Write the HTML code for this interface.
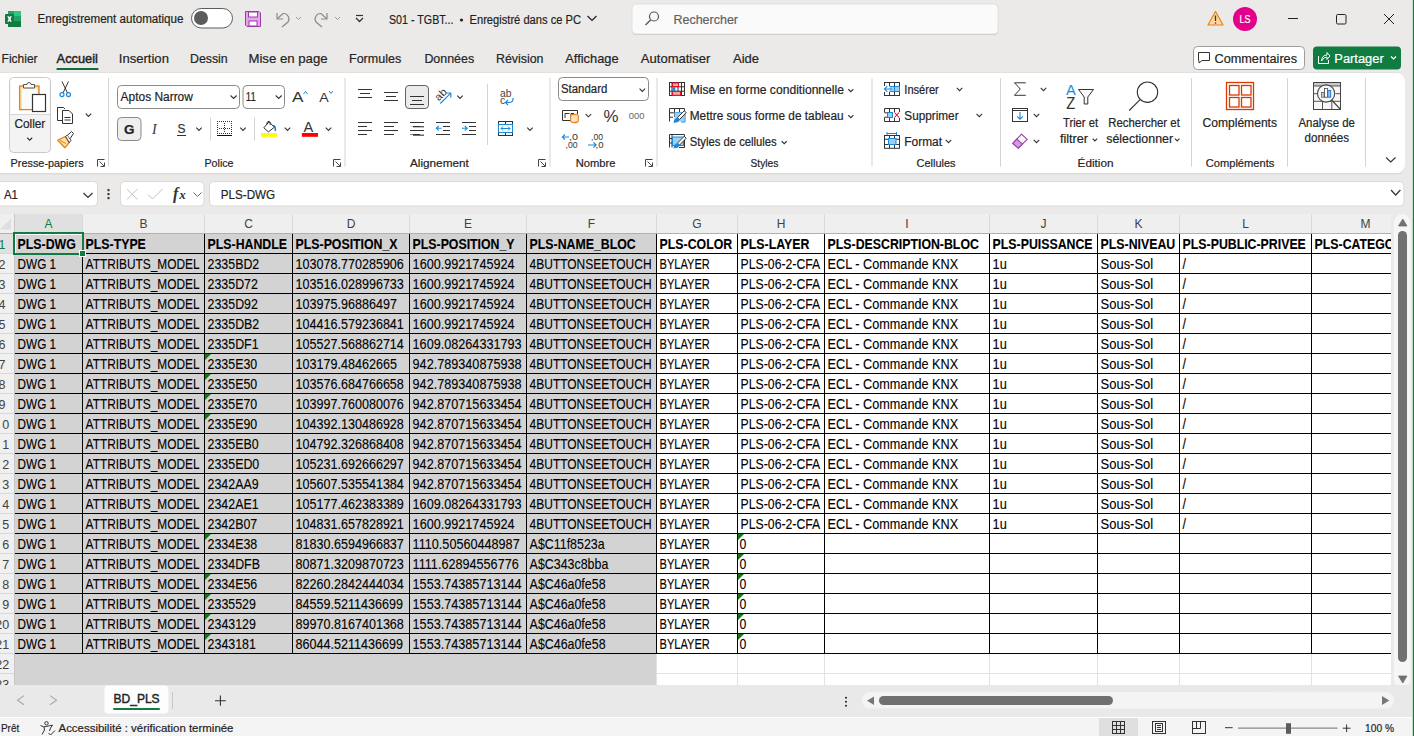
<!DOCTYPE html>
<html><head><meta charset="utf-8"><title>Excel - BD_PLS</title>
<style>html,body{margin:0;padding:0;width:1414px;height:736px;overflow:hidden;background:#ebeae8}
svg{display:block;font-family:"Liberation Sans",sans-serif}</style></head>
<body><svg width="1414" height="736" viewBox="0 0 1414 736">
<defs><clipPath id="rhclip"><rect x="0" y="233" width="14" height="452"/></clipPath>
<clipPath id="gridclip"><rect x="0" y="233" width="1391" height="452"/></clipPath></defs>
<rect x="0" y="0" width="1414" height="736" fill="#ebeae8"/>
<g transform="translate(5,11)">
<rect x="3" y="0" width="13" height="16" rx="1" fill="#185c37"/>
<rect x="3" y="0" width="13" height="5.5" fill="#21a366"/>
<rect x="9" y="0" width="7" height="5.5" fill="#33c481"/>
<rect x="9" y="5.5" width="7" height="5" fill="#21a366"/>
<rect x="3" y="10.5" width="13" height="5.5" fill="#107c41"/>
<rect x="0" y="3" width="9" height="10" rx="1" fill="#107c41"/>
<path d="M2.3 5.2 L4 5.2 L4.6 6.6 L5.2 5.2 L6.8 5.2 L5.5 8 L6.8 10.8 L5.2 10.8 L4.6 9.4 L4 10.8 L2.3 10.8 L3.6 8 Z" fill="#fff"/>
</g>
<text x="37.50" y="23.40" font-size="12" fill="#1f1f1f" textLength="145.98" lengthAdjust="spacingAndGlyphs" stroke="#1f1f1f" stroke-width="0.2">Enregistrement automatique</text>
<rect x="191.5" y="8.5" width="41" height="19.5" rx="9.75" fill="#fff" stroke="#5c5c5c" stroke-width="1"/>
<circle cx="201" cy="18" r="7" fill="#5c5c5c"/>
<g transform="translate(245,11)"><path d="M0.5 0.5 H14 L15.5 2 V15.5 H2 L0.5 14 Z" fill="#e3a6e8" stroke="#9b3ba8" stroke-width="1"/>
<rect x="3.5" y="1" width="9" height="5" fill="#fff" stroke="#9b3ba8" stroke-width="1"/>
<rect x="4" y="10" width="8" height="5" fill="#fff" stroke="#9b3ba8" stroke-width="1"/></g>
<path d="M277 13 V19 H283" fill="none" stroke="#8a8a8a" stroke-width="1.2"/><path d="M277.5 18.5 L283 13.5 A5.5 5.5 0 0 1 288 22 L282 27" fill="none" stroke="#8a8a8a" stroke-width="1.2"/>
<path d="M296 17 L298.5 19.5 L301 17" fill="none" stroke="#9a9a9a" stroke-width="1"/>
<path d="M327 13 V19 H321" fill="none" stroke="#8a8a8a" stroke-width="1.2"/><path d="M326.5 18.5 L321 13.5 A5.5 5.5 0 0 0 316 22 L322 27" fill="none" stroke="#8a8a8a" stroke-width="1.2"/>
<path d="M335 17 L337.5 19.5 L340 17" fill="none" stroke="#9a9a9a" stroke-width="1"/>
<path d="M356 15.5 H363" stroke="#333" stroke-width="1.2"/><path d="M356 18 L359.5 21.5 L363 18" fill="none" stroke="#333" stroke-width="1.3"/>
<text x="389.00" y="23.90" font-size="12" fill="#1f1f1f" textLength="64.49" lengthAdjust="spacingAndGlyphs" stroke="#1f1f1f" stroke-width="0.2">S01 - TGBT...</text>
<circle cx="461.5" cy="20" r="1.6" fill="#1f1f1f"/>
<text x="469.50" y="23.90" font-size="12" fill="#1f1f1f" textLength="111.50" lengthAdjust="spacingAndGlyphs" stroke="#1f1f1f" stroke-width="0.2">Enregistré dans ce PC</text>
<path d="M587.5 16 L592 20.5 L596.5 16" fill="none" stroke="#1f1f1f" stroke-width="1.2"/>
<rect x="632" y="5" width="366" height="30" rx="4" fill="#c9c9c9"/><rect x="632" y="4" width="366" height="30" rx="4" fill="#fafafa" stroke="#dcdcdc" stroke-width="0.8"/>
<circle cx="654" cy="16.5" r="4.5" fill="none" stroke="#555" stroke-width="1.2"/><path d="M650.8 19.7 L645.5 25" stroke="#555" stroke-width="1.3"/>
<text x="673.50" y="24.00" font-size="13" fill="#616161" textLength="64.49" lengthAdjust="spacingAndGlyphs" stroke="#616161" stroke-width="0.2">Rechercher</text>
<path d="M1215.5 11.5 L1223 25 H1208 Z" fill="#fcd9a0" stroke="#e8801a" stroke-width="1.2" stroke-linejoin="round"/><path d="M1215.5 15.5 V21" stroke="#333" stroke-width="1.3"/><circle cx="1215.5" cy="23" r="0.8" fill="#333"/>
<circle cx="1245" cy="19" r="12" fill="#e3008c"/>
<text x="1239.50" y="23.00" font-size="10" fill="#ffffff" textLength="10.98" lengthAdjust="spacingAndGlyphs" stroke="#ffffff" stroke-width="0.2">LS</text>
<path d="M1288 18.5 H1298" stroke="#222" stroke-width="1"/>
<rect x="1336.5" y="14.5" width="9.5" height="9.5" rx="1.2" fill="none" stroke="#222" stroke-width="1"/>
<path d="M1384 14 L1394 24 M1394 14 L1384 24" stroke="#222" stroke-width="1"/>
<text x="1.60" y="62.80" font-size="13" fill="#242424" textLength="36.01" lengthAdjust="spacingAndGlyphs" stroke="#242424" stroke-width="0.2">Fichier</text>
<text x="56.60" y="62.80" font-size="13" fill="#242424" textLength="41.28" lengthAdjust="spacingAndGlyphs" stroke="#242424" stroke-width="0.45">Accueil</text>
<text x="118.80" y="62.80" font-size="13" fill="#242424" textLength="50.11" lengthAdjust="spacingAndGlyphs" stroke="#242424" stroke-width="0.2">Insertion</text>
<text x="190.00" y="62.80" font-size="13" fill="#242424" textLength="37.72" lengthAdjust="spacingAndGlyphs" stroke="#242424" stroke-width="0.2">Dessin</text>
<text x="248.40" y="62.80" font-size="13" fill="#242424" textLength="79.19" lengthAdjust="spacingAndGlyphs" stroke="#242424" stroke-width="0.2">Mise en page</text>
<text x="349.00" y="62.80" font-size="13" fill="#242424" textLength="52.17" lengthAdjust="spacingAndGlyphs" stroke="#242424" stroke-width="0.2">Formules</text>
<text x="424.40" y="62.80" font-size="13" fill="#242424" textLength="49.78" lengthAdjust="spacingAndGlyphs" stroke="#242424" stroke-width="0.2">Données</text>
<text x="496.00" y="62.80" font-size="13" fill="#242424" textLength="47.50" lengthAdjust="spacingAndGlyphs" stroke="#242424" stroke-width="0.2">Révision</text>
<text x="565.30" y="62.80" font-size="13" fill="#242424" textLength="53.22" lengthAdjust="spacingAndGlyphs" stroke="#242424" stroke-width="0.2">Affichage</text>
<text x="640.80" y="62.80" font-size="13" fill="#242424" textLength="69.61" lengthAdjust="spacingAndGlyphs" stroke="#242424" stroke-width="0.2">Automatiser</text>
<text x="733.00" y="62.80" font-size="13" fill="#242424" textLength="26.02" lengthAdjust="spacingAndGlyphs" stroke="#242424" stroke-width="0.2">Aide</text>
<rect x="56.3" y="67.9" width="42.4" height="2.2" rx="1.1" fill="#0e6e3a"/>
<rect x="1193.5" y="46.5" width="111" height="23" rx="4" fill="#fff" stroke="#9e9e9e" stroke-width="1"/>
<path d="M1198.5 52.5 H1209.5 V60.5 H1202 L1199 63 V60.5 H1198.5 Z" fill="none" stroke="#333" stroke-width="1"/>
<text x="1214.50" y="63.00" font-size="12" fill="#242424" textLength="82.53" lengthAdjust="spacingAndGlyphs" stroke="#242424" stroke-width="0.2">Commentaires</text>
<rect x="1313" y="46.5" width="88" height="23" rx="4" fill="#107c41"/>
<path d="M1318.5 56 V63.5 H1328.5 V60" fill="none" stroke="#fff" stroke-width="1"/><path d="M1321.5 61 Q1322 55 1327 55 V52.5 L1330 56 L1327 59.5 V57 Q1323.5 57 1321.5 61" fill="none" stroke="#fff" stroke-width="1"/>
<text x="1334.30" y="63.00" font-size="12" fill="#ffffff" textLength="49.41" lengthAdjust="spacingAndGlyphs" stroke="#ffffff" stroke-width="0.2">Partager</text>
<path d="M1391 56.5 L1393.5 59 L1396 56.5" fill="none" stroke="#fff" stroke-width="1.2"/>
<rect x="-8" y="75" width="1413" height="100" rx="8" fill="#dddcda" opacity="0.5"/><rect x="-8" y="74" width="1413" height="100" rx="8" fill="#d5d4d2" opacity="0.6"/>
<rect x="-8" y="72.3" width="1413" height="100" rx="8" fill="#dedddb"/><rect x="-8" y="73" width="1413" height="100" rx="8" fill="#ffffff"/>
<rect x="9.5" y="77.5" width="41" height="75" rx="4" fill="#f3f3f3" stroke="#c9c9c9" stroke-width="1"/>
<path d="M10 114.5 H50" stroke="#d6d6d6" stroke-width="1"/>
<path d="M10.5 114 V81.5 A3.5 3.5 0 0 1 14 78 H46 A3.5 3.5 0 0 1 49.5 81.5 V114 Z" fill="#fff"/>
<rect x="19.6" y="86" width="19.4" height="23.6" fill="#fde2a0" stroke="#e8801a" stroke-width="1.3"/>
<rect x="22" y="88.5" width="15.5" height="20.4" fill="#fafafa"/>
<path d="M23.5 88 V84.5 H27 A2 2 0 0 1 31 84.5 H34.5 V88 Z" fill="#fff" stroke="#555" stroke-width="1"/>
<rect x="32.5" y="94.5" width="13" height="17" fill="#fff" stroke="#333" stroke-width="1.2"/>
<text x="14.40" y="127.80" font-size="12" fill="#242424" textLength="30.92" lengthAdjust="spacingAndGlyphs" stroke="#242424" stroke-width="0.2">Coller</text>
<path d="M27.20 137.75 L29.70 140.25 L32.20 137.75" fill="none" stroke="#333" stroke-width="1.1"/>
<g fill="none" stroke="#333" stroke-width="1"><path d="M62 81.5 L67.5 93 M68.5 81.5 L63 93"/></g><g fill="none" stroke="#1e88d8" stroke-width="1.2"><circle cx="62" cy="94.6" r="2"/><circle cx="68.5" cy="94.6" r="2"/></g>
<g fill="none" stroke="#333" stroke-width="1"><path d="M62.5 120.5 H57.5 V107.5 H63.5 L65 109"/><path d="M62.5 110.5 H69 L72.5 114 V123.5 H62.5 Z"/><path d="M64.5 117.5 H70.5 M64.5 120 H70.5"/></g>
<path d="M85.75 113.62 L88.50 116.38 L91.25 113.62" fill="none" stroke="#333" stroke-width="1.1"/>
<path d="M57.8 140.2 L65.5 136.5 L69.2 142.5 L64.8 147.8 Z" fill="#fde2a0" stroke="#e8801a" stroke-width="1.3" stroke-linejoin="round"/><path d="M60 140.5 L66 143.5" stroke="#e8801a" stroke-width="1"/>
<path d="M65.5 136.5 L67.5 135 L71 140.5 L69.2 142.5 Z" fill="#fff" stroke="#333" stroke-width="1"/><path d="M67.5 135.3 L71.5 131.5 L73.5 133.5 L70.2 138.5" fill="#fff" stroke="#333" stroke-width="1"/>
<text x="10.60" y="167.00" font-size="11.5" fill="#242424" textLength="73.00" lengthAdjust="spacingAndGlyphs" stroke="#242424" stroke-width="0.2">Presse-papiers</text>
<g fill="none" stroke="#444" stroke-width="1"><path d="M97.5 166.5 V159.5 H104.5"/><path d="M99.5 161.5 L104 166 M104.5 162.5 V166.5 H100.5"/></g>
<rect x="108" y="78" width="1" height="88.6" fill="#d4d4d4"/>
<rect x="117.5" y="85.5" width="122" height="23" rx="4" fill="#fff" stroke="#8a8a8a" stroke-width="1"/>
<text x="120.60" y="100.80" font-size="12" fill="#242424" textLength="72.27" lengthAdjust="spacingAndGlyphs" stroke="#242424" stroke-width="0.2">Aptos Narrow</text>
<path d="M230.60 95.50 L233.60 98.50 L236.60 95.50" fill="none" stroke="#333" stroke-width="1.1"/>
<rect x="243" y="85.5" width="41.5" height="23" rx="4" fill="#fff" stroke="#8a8a8a" stroke-width="1"/>
<text x="245.80" y="100.80" font-size="12" fill="#242424" textLength="9.98" lengthAdjust="spacingAndGlyphs" stroke="#242424" stroke-width="0.2">11</text>
<path d="M275.70 95.50 L278.70 98.50 L281.70 95.50" fill="none" stroke="#333" stroke-width="1.1"/>
<text x="292.00" y="102.00" font-size="15.5" fill="#333" textLength="11.45" lengthAdjust="spacingAndGlyphs">A</text>
<path d="M303.5 94 L305.5 91.5 L307.5 94" fill="none" stroke="#1e88d8" stroke-width="1"/>
<text x="319.30" y="102.00" font-size="13" fill="#333" textLength="9.46" lengthAdjust="spacingAndGlyphs">A</text>
<path d="M329 91 L331 93.5 L333 91" fill="none" stroke="#1e88d8" stroke-width="1"/>
<rect x="117.5" y="117.5" width="23.5" height="23" rx="4" fill="#eeeeee" stroke="#8a8a8a" stroke-width="1"/>
<text x="124.00" y="133.50" font-size="13" fill="#222" font-weight="bold" textLength="10.47" lengthAdjust="spacingAndGlyphs" stroke="#222" stroke-width="0.2">G</text>
<text x="152" y="133.5" font-size="14" font-style="italic" font-family="Liberation Serif" fill="#333">I</text>
<text x="177.50" y="133.00" font-size="12.5" fill="#333" textLength="8.02" lengthAdjust="spacingAndGlyphs" stroke="#333" stroke-width="0.2">S</text>
<rect x="177" y="135" width="9" height="1" fill="#333"/>
<path d="M196.25 127.62 L199.00 130.38 L201.75 127.62" fill="none" stroke="#333" stroke-width="1.1"/>
<rect x="210" y="117.6" width="1" height="23.0" fill="#d4d4d4"/>
<g fill="#333"><rect x="227" y="133" width="1" height="1"/><rect x="231" y="121" width="1" height="1"/><rect x="231" y="127" width="1" height="1"/><rect x="231" y="133" width="1" height="1"/><rect x="224" y="125" width="1" height="1"/><rect x="224" y="131" width="1" height="1"/><rect x="229" y="121" width="1" height="1"/><rect x="229" y="133" width="1" height="1"/><rect x="219" y="128" width="1" height="1"/><rect x="217" y="125" width="1" height="1"/><rect x="217" y="131" width="1" height="1"/><rect x="231" y="123" width="1" height="1"/><rect x="221" y="128" width="1" height="1"/><rect x="231" y="129" width="1" height="1"/><rect x="223" y="128" width="1" height="1"/><rect x="224" y="127" width="1" height="1"/><rect x="219" y="121" width="1" height="1"/><rect x="219" y="133" width="1" height="1"/><rect x="217" y="121" width="1" height="1"/><rect x="225" y="128" width="1" height="1"/><rect x="227" y="128" width="1" height="1"/><rect x="217" y="127" width="1" height="1"/><rect x="217" y="133" width="1" height="1"/><rect x="221" y="121" width="1" height="1"/><rect x="231" y="125" width="1" height="1"/><rect x="224" y="123" width="1" height="1"/><rect x="223" y="121" width="1" height="1"/><rect x="221" y="133" width="1" height="1"/><rect x="231" y="131" width="1" height="1"/><rect x="224" y="129" width="1" height="1"/><rect x="223" y="133" width="1" height="1"/><rect x="229" y="128" width="1" height="1"/><rect x="225" y="121" width="1" height="1"/><rect x="227" y="121" width="1" height="1"/><rect x="225" y="133" width="1" height="1"/><rect x="217" y="123" width="1" height="1"/><rect x="217" y="129" width="1" height="1"/></g><rect x="217" y="135" width="15" height="1" fill="#111"/>
<path d="M240.25 127.62 L243.00 130.38 L245.75 127.62" fill="none" stroke="#333" stroke-width="1.1"/>
<rect x="254" y="117.6" width="1" height="23.0" fill="#d4d4d4"/>
<path d="M263.8 127.8 L269.2 121.8 L274.3 127.3 L268.4 131.9 Z" fill="#fff" stroke="#333" stroke-width="1" stroke-linejoin="round"/><path d="M266.5 124.8 Q267 121 269 121.2 Q270.5 121.5 270.2 125" fill="none" stroke="#333" stroke-width="1"/><path d="M273.2 125.5 Q276 126.5 275.2 131" fill="none" stroke="#1e6fd8" stroke-width="1.5"/><rect x="261" y="133" width="16" height="3.8" fill="#ffff00"/>
<path d="M284.75 127.62 L287.50 130.38 L290.25 127.62" fill="none" stroke="#333" stroke-width="1.1"/>
<text x="303.50" y="131.50" font-size="14" fill="#333" textLength="9.76" lengthAdjust="spacingAndGlyphs">A</text>
<rect x="301.9" y="133" width="16.1" height="3.8" fill="#ff0000"/>
<path d="M325.75 127.62 L328.50 130.38 L331.25 127.62" fill="none" stroke="#333" stroke-width="1.1"/>
<text x="204.50" y="167.00" font-size="11.5" fill="#242424" textLength="28.99" lengthAdjust="spacingAndGlyphs" stroke="#242424" stroke-width="0.2">Police</text>
<g fill="none" stroke="#444" stroke-width="1"><path d="M333.5 166.5 V159.5 H340.5"/><path d="M335.5 161.5 L340 166 M340.5 162.5 V166.5 H336.5"/></g>
<rect x="344.5" y="78" width="1" height="88.6" fill="#d4d4d4"/>
<rect x="358.0" y="89" width="14" height="1" fill="#333"/>
<rect x="360.0" y="93" width="10" height="1" fill="#333"/>
<rect x="358.0" y="97" width="14" height="1" fill="#333"/>
<rect x="384.0" y="92" width="14" height="1" fill="#333"/>
<rect x="386.0" y="96" width="10" height="1" fill="#333"/>
<rect x="384.0" y="100" width="14" height="1" fill="#333"/>
<rect x="405.5" y="85.5" width="23" height="23" rx="3.5" fill="#ebebeb" stroke="#616161" stroke-width="1"/>
<rect x="410.0" y="96" width="14" height="1" fill="#333"/>
<rect x="412.0" y="100" width="10" height="1" fill="#333"/>
<rect x="410.0" y="104" width="14" height="1" fill="#333"/>
<g transform="rotate(-45 440.5 94)"><text x="434" y="98" font-size="10.5" fill="#333" textLength="12.5" lengthAdjust="spacingAndGlyphs">ab</text></g>
<path d="M440.3 103.5 L450.5 93.3 M446 93 H450.8 V97.8" fill="none" stroke="#1e88d8" stroke-width="1.1"/>
<path d="M457.25 95.62 L460.00 98.38 L462.75 95.62" fill="none" stroke="#333" stroke-width="1.1"/>
<rect x="487" y="83.7" width="1" height="61.3" fill="#d4d4d4"/>
<text x="500" y="96.5" font-size="10.5" fill="#444" textLength="11.5" lengthAdjust="spacingAndGlyphs">ab</text><text x="500" y="104" font-size="10.5" fill="#444">c</text>
<path d="M513 98 Q513.5 102.5 509 102.5 H506 M508 100 L505.5 102.5 L508 105" fill="none" stroke="#1e88d8" stroke-width="1.2"/>
<rect x="358" y="122" width="14" height="1" fill="#333"/>
<rect x="358" y="126" width="9" height="1" fill="#333"/>
<rect x="358" y="130" width="14" height="1" fill="#333"/>
<rect x="358" y="134" width="9" height="1" fill="#333"/>
<rect x="384" y="122" width="14" height="1" fill="#333"/>
<rect x="384" y="126" width="10" height="1" fill="#333"/>
<rect x="384" y="130" width="14" height="1" fill="#333"/>
<rect x="384" y="134" width="10" height="1" fill="#333"/>
<rect x="410" y="122" width="14" height="1" fill="#333"/>
<rect x="410" y="126" width="10" height="1" fill="#333"/>
<rect x="410" y="130" width="14" height="1" fill="#333"/>
<rect x="410" y="134" width="10" height="1" fill="#333"/>
<rect x="413" y="126.2" width="11" height="1.1" fill="#333"/><rect x="413" y="134.6" width="11" height="1.1" fill="#333"/><rect x="410" y="126.2" width="3" height="1.1" fill="#fff"/><rect x="410" y="134.6" width="3" height="1.1" fill="#fff"/>
<rect x="436" y="122" width="14" height="1" fill="#333"/>
<rect x="436" y="134" width="14" height="1" fill="#333"/>
<rect x="443" y="126" width="7" height="1" fill="#333"/>
<rect x="443" y="130" width="7" height="1" fill="#333"/>
<path d="M441.5 128.3 H436.5 M438.7 126 L436.3 128.3 L438.7 130.6" fill="none" stroke="#1e88d8" stroke-width="1.1"/>
<rect x="462" y="122" width="14" height="1" fill="#333"/>
<rect x="462" y="134" width="14" height="1" fill="#333"/>
<rect x="469" y="126" width="7" height="1" fill="#333"/>
<rect x="469" y="130" width="7" height="1" fill="#333"/>
<path d="M462 128.3 H467 M464.8 126 L467.2 128.3 L464.8 130.6" fill="none" stroke="#1e88d8" stroke-width="1.1"/>
<g fill="none" stroke="#333" stroke-width="1"><rect x="498.5" y="121.5" width="14" height="14"/><path d="M505.5 121.5 V124 M505.5 133 V135.5"/></g><rect x="498.5" y="124.5" width="14" height="8" fill="#fff" stroke="#1e88d8" stroke-width="1.1"/><path d="M501 128.5 H510 M503 126.5 L501 128.5 L503 130.5 M508 126.5 L510 128.5 L508 130.5" fill="none" stroke="#1e88d8" stroke-width="1"/>
<path d="M527.25 127.62 L530.00 130.38 L532.75 127.62" fill="none" stroke="#333" stroke-width="1.1"/>
<text x="410.00" y="167.00" font-size="11.5" fill="#242424" textLength="58.78" lengthAdjust="spacingAndGlyphs" stroke="#242424" stroke-width="0.2">Alignement</text>
<g fill="none" stroke="#444" stroke-width="1"><path d="M538.5 166.5 V159.5 H545.5"/><path d="M540.5 161.5 L545 166 M545.5 162.5 V166.5 H541.5"/></g>
<rect x="549.5" y="78" width="1" height="88.6" fill="#d4d4d4"/>
<rect x="558.5" y="77.5" width="90" height="23" rx="4" fill="#fff" stroke="#8a8a8a" stroke-width="1"/>
<text x="561.00" y="92.70" font-size="12" fill="#242424" textLength="46.29" lengthAdjust="spacingAndGlyphs" stroke="#242424" stroke-width="0.2">Standard</text>
<path d="M639.55 88.62 L642.30 91.38 L645.05 88.62" fill="none" stroke="#333" stroke-width="1.1"/>
<g fill="none" stroke="#333" stroke-width="1"><path d="M572.5 120.5 H562.5 V110.5 H577.5 V114"/><path d="M565 118 V113.5 H569.5 M571 118 V113.5 H574"/></g><g fill="#fde3c4" stroke="#e8801a" stroke-width="1.1"><ellipse cx="574.5" cy="116" rx="3.8" ry="1.6"/><path d="M570.7 116 V121 A3.8 1.6 0 0 0 578.3 121 V116"/></g>
<path d="M585.65 114.03 L588.40 116.78 L591.15 114.03" fill="none" stroke="#333" stroke-width="1.1"/>
<text x="603.5" y="121.5" font-size="16" fill="#333" textLength="15" lengthAdjust="spacingAndGlyphs">%</text>
<text x="628.8" y="118.5" font-size="9.5" fill="#666" textLength="15.8" lengthAdjust="spacingAndGlyphs">000</text>
<path d="M569 137 H562.5 M565 134.5 L562.3 137 L565 139.5" fill="none" stroke="#1e88d8" stroke-width="1.1"/><text x="569" y="139.5" font-size="9.5" fill="#333" textLength="9" lengthAdjust="spacingAndGlyphs">,0</text><text x="565.5" y="148.3" font-size="9.5" fill="#333" textLength="12" lengthAdjust="spacingAndGlyphs">,00</text>
<text x="591" y="139.5" font-size="9.5" fill="#333" textLength="12" lengthAdjust="spacingAndGlyphs">,00</text><path d="M588 145 H596 M593.5 142.5 L596.2 145 L593.5 147.5" fill="none" stroke="#1e88d8" stroke-width="1.1"/><text x="595.5" y="148.3" font-size="9.5" fill="#333" textLength="8" lengthAdjust="spacingAndGlyphs">,0</text>
<text x="575.80" y="167.00" font-size="11.5" fill="#242424" textLength="39.62" lengthAdjust="spacingAndGlyphs" stroke="#242424" stroke-width="0.2">Nombre</text>
<g fill="none" stroke="#444" stroke-width="1"><path d="M645.5 166.5 V159.5 H652.5"/><path d="M647.5 161.5 L652 166 M652.5 162.5 V166.5 H648.5"/></g>
<rect x="656.5" y="78" width="1" height="88.6" fill="#d4d4d4"/>
<g fill="none" stroke="#333" stroke-width="1"><rect x="669.5" y="82.5" width="15" height="13"/><path d="M672 82.5 V95.5 M678 82.5 V95.5 M681.5 82.5 V95.5 M669.5 86.8 H684.5 M669.5 91.2 H684.5"/></g>
<rect x="672.5" y="83" width="6" height="3.5" fill="#f7a1a8" stroke="#e81123" stroke-width="1"/><rect x="672.5" y="91.5" width="8" height="3.8" fill="#f7a1a8" stroke="#e81123" stroke-width="1"/><rect x="672.5" y="87.2" width="2.8" height="3.8" fill="#1e88d8"/>
<text x="689.70" y="93.80" font-size="12" fill="#242424" textLength="154.29" lengthAdjust="spacingAndGlyphs" stroke="#242424" stroke-width="0.2">Mise en forme conditionnelle</text>
<path d="M848.30 89.25 L850.80 91.75 L853.30 89.25" fill="none" stroke="#333" stroke-width="1.1"/>
<g fill="none" stroke="#333" stroke-width="1"><path d="M669.5 121.5 V108.5 H684.5 V112 M674.5 108.5 V117 M679.5 108.5 V112 M669.5 112.8 H684.5 M669.5 117.2 H673"/></g>
<path d="M674.5 112.5 H685 V122 H681" fill="#9ccff2" stroke="#1e88d8" stroke-width="1"/><rect x="674.5" y="112.5" width="10" height="9" fill="#9ccff2"/>
<path d="M684.3 110.8 L686.2 112.7 L679.5 119.6 L677.4 117.6 Z" fill="#fff" stroke="#333" stroke-width="1" stroke-linejoin="round"/><path d="M677.4 117.6 L679.5 119.6 Q679 123 673.5 122.8 Q674 118.5 677.4 117.6 Z" fill="#1e88d8"/>
<text x="689.70" y="119.70" font-size="12" fill="#242424" textLength="153.92" lengthAdjust="spacingAndGlyphs" stroke="#242424" stroke-width="0.2">Mettre sous forme de tableau</text>
<path d="M848.30 115.25 L850.80 117.75 L853.30 115.25" fill="none" stroke="#333" stroke-width="1.1"/>
<g fill="none" stroke="#333" stroke-width="1"><path d="M669.5 147.5 V134.5 H684.5 V147.5 H679 M672 134.5 V147.5 M669.5 138.5 H684.5 M669.5 143 H672"/></g>
<rect x="672.5" y="137" width="11" height="8.5" fill="#9ccff2" stroke="#1e88d8" stroke-width="1"/>
<path d="M684.3 136.3 L686.2 138.2 L679.5 145.1 L677.4 143.1 Z" fill="#fff" stroke="#333" stroke-width="1" stroke-linejoin="round"/><path d="M677.4 143.1 L679.5 145.1 Q679 148.5 673.5 148.3 Q674 144 677.4 143.1 Z" fill="#1e88d8"/>
<text x="689.70" y="145.70" font-size="12" fill="#242424" textLength="87.01" lengthAdjust="spacingAndGlyphs" stroke="#242424" stroke-width="0.2">Styles de cellules</text>
<path d="M781.70 141.25 L784.20 143.75 L786.70 141.25" fill="none" stroke="#333" stroke-width="1.1"/>
<text x="750.50" y="167.00" font-size="11.5" fill="#242424" textLength="27.78" lengthAdjust="spacingAndGlyphs" stroke="#242424" stroke-width="0.2">Styles</text>
<rect x="871.5" y="78" width="1" height="88.6" fill="#d4d4d4"/>
<g fill="none" stroke="#333" stroke-width="1"><rect x="884.5" y="82.5" width="15" height="13"/><path d="M889.5 82.5 V86.5 M894.5 82.5 V86.5 M889.5 91 V95.5 M894.5 91 V95.5 M884.5 86.8 H899.5 M884.5 91.2 H899.5"/></g>
<rect x="888.5" y="86.5" width="11" height="5" fill="#9ccff2" stroke="#1e88d8" stroke-width="1"/><path d="M894.5 86.5 V91.5" stroke="#1e88d8" stroke-width="1"/><rect x="883.5" y="86" width="6" height="6" fill="#fff"/><path d="M892 89 H884.5 M887.3 86.2 L884.5 89 L887.3 91.8" fill="none" stroke="#1e88d8" stroke-width="1.1"/>
<text x="904.30" y="93.90" font-size="12" fill="#242424" textLength="34.53" lengthAdjust="spacingAndGlyphs" stroke="#242424" stroke-width="0.2">Insérer</text>
<path d="M956.85 87.92 L959.60 90.67 L962.35 87.92" fill="none" stroke="#333" stroke-width="1.1"/>
<g fill="none" stroke="#333" stroke-width="1"><path d="M884.5 112.5 V108.5 H899.5 V112.5 M884.5 117.5 V121.5 H899.5 V117.5 M889.5 108.5 V112.5 M894.5 108.5 V112.5 M889.5 117.5 V121.5 M894.5 117.5 V121.5 M884.5 112.8 H888 M884.5 117.2 H888 M893 112.8 H899.5 M893 117.2 H899.5"/></g>
<rect x="887.5" y="112.5" width="5" height="5" fill="#9ccff2" stroke="#1e88d8" stroke-width="1"/><rect x="893" y="112" width="7" height="6" fill="#fff"/><path d="M894.5 112.5 L899 117.5 M899 112.5 L894.5 117.5" stroke="#e81123" stroke-width="1.1"/>
<text x="904.30" y="120.00" font-size="12" fill="#242424" textLength="54.28" lengthAdjust="spacingAndGlyphs" stroke="#242424" stroke-width="0.2">Supprimer</text>
<path d="M976.55 113.92 L979.30 116.67 L982.05 113.92" fill="none" stroke="#333" stroke-width="1.1"/>
<g fill="none" stroke="#333" stroke-width="1"><rect x="884.5" y="135.5" width="15" height="12.8"/><path d="M889.5 135.5 V148.3 M894.5 135.5 V148.3 M884.5 139.3 H899.5 M884.5 144.5 H899.5"/></g>
<rect x="888.5" y="138.5" width="7.5" height="6" fill="#9ccff2" stroke="#1e88d8" stroke-width="1"/><rect x="884" y="132" width="16" height="3" fill="#fff"/><path d="M887 133.5 H896.5 M887 132 V135 M896.5 132 V135" fill="none" stroke="#1e88d8" stroke-width="1"/>
<text x="904.30" y="145.50" font-size="12" fill="#242424" textLength="37.73" lengthAdjust="spacingAndGlyphs" stroke="#242424" stroke-width="0.2">Format</text>
<path d="M945.75 139.93 L948.50 142.68 L951.25 139.93" fill="none" stroke="#333" stroke-width="1.1"/>
<text x="916.60" y="167.00" font-size="11.5" fill="#242424" textLength="38.92" lengthAdjust="spacingAndGlyphs" stroke="#242424" stroke-width="0.2">Cellules</text>
<rect x="1000" y="78" width="1" height="88.6" fill="#d4d4d4"/>
<path d="M1025.8 82.8 H1014.5 L1020.3 89 L1014.5 95.3 H1025.8" fill="none" stroke="#333" stroke-width="1" stroke-linejoin="miter"/>
<path d="M1040.75 87.92 L1043.50 90.67 L1046.25 87.92" fill="none" stroke="#333" stroke-width="1.1"/>
<rect x="1012.5" y="108.5" width="15" height="13" fill="#fff" stroke="#333" stroke-width="1"/><path d="M1012.5 110.5 H1027.5" stroke="#333" stroke-width="1"/><path d="M1020 112 V119 M1017.3 116.5 L1020 119.3 L1022.7 116.5" fill="none" stroke="#1e88d8" stroke-width="1.1"/>
<path d="M1033.75 113.92 L1036.50 116.67 L1039.25 113.92" fill="none" stroke="#333" stroke-width="1.1"/>
<path d="M1012.8 143.3 L1021.5 134.2 L1027.2 139.3 L1018.3 148.2 Z" fill="#f5f5f5" stroke="#9b3ba8" stroke-width="1.1" stroke-linejoin="round"/><path d="M1012.8 143.3 L1016.8 139.2 L1022.5 144.2 L1018.3 148.2 Z" fill="#d59be0" stroke="#9b3ba8" stroke-width="1.1" stroke-linejoin="round"/>
<path d="M1033.75 139.93 L1036.50 142.68 L1039.25 139.93" fill="none" stroke="#333" stroke-width="1.1"/>
<text x="1066" y="94.6" font-size="15.5" fill="#1e88d8" textLength="9.8" lengthAdjust="spacingAndGlyphs">A</text><text x="1066.3" y="108.6" font-size="16" fill="#333" textLength="9" lengthAdjust="spacingAndGlyphs">Z</text>
<path d="M1078.5 89.5 H1093.5 L1087.8 97 V104 H1084.2 V97 Z" fill="#f7f7f7" stroke="#333" stroke-width="1" stroke-linejoin="round"/>
<text x="1063.00" y="126.70" font-size="12" fill="#242424" textLength="35.00" lengthAdjust="spacingAndGlyphs" stroke="#242424" stroke-width="0.2">Trier et</text>
<text x="1060.00" y="142.70" font-size="12" fill="#242424" textLength="28.03" lengthAdjust="spacingAndGlyphs" stroke="#242424" stroke-width="0.2">filtrer</text>
<path d="M1092.65 138.68 L1094.90 140.93 L1097.15 138.68" fill="none" stroke="#333" stroke-width="1.1"/>
<circle cx="1147.5" cy="92.2" r="10.2" fill="none" stroke="#333" stroke-width="1.1"/><path d="M1140.3 99.4 L1129.2 110.5" stroke="#333" stroke-width="1.1"/>
<text x="1108.30" y="126.70" font-size="12" fill="#242424" textLength="71.51" lengthAdjust="spacingAndGlyphs" stroke="#242424" stroke-width="0.2">Rechercher et</text>
<text x="1106.30" y="142.70" font-size="12" fill="#242424" textLength="66.73" lengthAdjust="spacingAndGlyphs" stroke="#242424" stroke-width="0.2">sélectionner</text>
<path d="M1174.95 138.68 L1177.20 140.93 L1179.45 138.68" fill="none" stroke="#333" stroke-width="1.1"/>
<text x="1077.60" y="167.00" font-size="11.5" fill="#242424" textLength="35.97" lengthAdjust="spacingAndGlyphs" stroke="#242424" stroke-width="0.2">Édition</text>
<rect x="1191" y="78" width="1" height="88.6" fill="#d4d4d4"/>
<g fill="none" stroke="#d83b01" stroke-width="1.3"><rect x="1226.5" y="82.5" width="27" height="27"/><rect x="1229.5" y="85.5" width="9.5" height="9.5"/><rect x="1241.5" y="85.5" width="9.5" height="9.5"/><rect x="1229.5" y="97.5" width="9.5" height="9.5"/><rect x="1241.5" y="97.5" width="9.5" height="9.5"/></g>
<text x="1202.50" y="127.00" font-size="12" fill="#242424" textLength="74.49" lengthAdjust="spacingAndGlyphs" stroke="#242424" stroke-width="0.2">Compléments</text>
<text x="1205.70" y="167.00" font-size="11.5" fill="#242424" textLength="68.69" lengthAdjust="spacingAndGlyphs" stroke="#242424" stroke-width="0.2">Compléments</text>
<rect x="1287" y="78" width="1" height="88.6" fill="#d4d4d4"/>
<rect x="1313.5" y="82.5" width="27" height="27" fill="#f7f7f7" stroke="#444" stroke-width="1"/><rect x="1314" y="83" width="26" height="3" fill="#c8c8c8"/>
<path d="M1313.5 86 H1340.5 M1313.5 101.3 H1340.5 M1322.5 101.3 V109.5 M1331.8 101.3 V109.5 M1313.5 93.7 H1317 M1335.5 93.7 H1340.5" stroke="#555" stroke-width="1" fill="none"/>
<circle cx="1326.1" cy="93.5" r="8.6" fill="#f7f7f7" stroke="#444" stroke-width="1.1"/><path d="M1331.6 100 L1340.6 109.5" stroke="#444" stroke-width="1.1"/>
<rect x="1321.5" y="92.5" width="2.6" height="4.7" fill="#d0d0d0" stroke="#555" stroke-width="0.7"/><rect x="1324.4" y="88.4" width="3" height="8.8" fill="#fff" stroke="#444" stroke-width="0.8"/><rect x="1327.8" y="90.4" width="2.9" height="6.8" fill="#8cc4ee" stroke="#1e6fd8" stroke-width="0.9"/>
<text x="1298.40" y="127.00" font-size="12" fill="#242424" textLength="56.58" lengthAdjust="spacingAndGlyphs" stroke="#242424" stroke-width="0.2">Analyse de</text>
<text x="1304.50" y="142.00" font-size="12" fill="#242424" textLength="44.52" lengthAdjust="spacingAndGlyphs" stroke="#242424" stroke-width="0.2">données</text>
<rect x="1365" y="78" width="1" height="88.6" fill="#d4d4d4"/>
<path d="M1386 157.5 L1390.75 162 L1395.5 157.5" fill="none" stroke="#333" stroke-width="1.1"/>
<rect x="-6.5" y="181.5" width="104" height="24.5" rx="4" fill="#fff" stroke="#d9d9d9" stroke-width="1"/>
<text x="4.00" y="198.50" font-size="13" fill="#242424" textLength="13.98" lengthAdjust="spacingAndGlyphs" stroke="#242424" stroke-width="0.2">A1</text>
<path d="M83.5 193 L88 197.5 L92.5 193" fill="none" stroke="#333" stroke-width="1.2"/>
<rect x="107.5" y="189" width="2" height="2.2" fill="#333"/><rect x="107.5" y="193" width="2" height="2.2" fill="#333"/><rect x="107.5" y="197" width="2" height="2.2" fill="#333"/>
<rect x="120.5" y="181.5" width="83.5" height="24.5" rx="4" fill="#fff" stroke="#d9d9d9" stroke-width="1"/>
<path d="M127 189 L137.5 199.5 M137.5 189 L127 199.5" stroke="#c2c2c2" stroke-width="1"/>
<path d="M148 194.5 L152.5 199 L162.5 189" fill="none" stroke="#c2c2c2" stroke-width="1"/>
<text x="173" y="199" font-family="Liberation Serif" font-style="italic" font-weight="bold" font-size="16" fill="#333">f</text><text x="179.3" y="199" font-family="Liberation Serif" font-style="italic" font-weight="bold" font-size="13" fill="#333">x</text>
<path d="M193.5 192.5 L197.5 196.5 L201.5 192.5" fill="none" stroke="#666" stroke-width="1"/>
<rect x="209.5" y="181.5" width="1194.5" height="24.5" rx="4" fill="#fff" stroke="#d9d9d9" stroke-width="1"/>
<text x="220.70" y="198.80" font-size="13" fill="#242424" textLength="54.52" lengthAdjust="spacingAndGlyphs" stroke="#242424" stroke-width="0.2">PLS-DWG</text>
<path d="M1391 190 L1395.7 195 L1400.4 190" fill="none" stroke="#333" stroke-width="1.2"/>
<rect x="0" y="214" width="1391" height="19" fill="#efefef"/>
<rect x="15" y="214" width="67" height="19" fill="#e0e0e0"/>
<path d="M11 218.5 V229.5 H0 Z" fill="#dedede"/>
<rect x="0" y="233" width="14" height="452" fill="#f0f0f0"/>
<rect x="0" y="233" width="14" height="20" fill="#e0e0e0"/>
<rect x="15" y="233" width="641" height="452" fill="#d3d3d3"/>
<rect x="657" y="233" width="734" height="452" fill="#ffffff"/>
<rect x="656" y="654" width="1" height="31" fill="#e1e1e1"/>
<rect x="737" y="654" width="1" height="31" fill="#e1e1e1"/>
<rect x="824" y="654" width="1" height="31" fill="#e1e1e1"/>
<rect x="989" y="654" width="1" height="31" fill="#e1e1e1"/>
<rect x="1097" y="654" width="1" height="31" fill="#e1e1e1"/>
<rect x="1179" y="654" width="1" height="31" fill="#e1e1e1"/>
<rect x="1311" y="654" width="1" height="31" fill="#e1e1e1"/>
<rect x="657" y="673" width="734" height="1" fill="#e1e1e1"/>
<rect x="82" y="214" width="1" height="19" fill="#dadada"/>
<rect x="204" y="214" width="1" height="19" fill="#dadada"/>
<rect x="292" y="214" width="1" height="19" fill="#dadada"/>
<rect x="409" y="214" width="1" height="19" fill="#dadada"/>
<rect x="526" y="214" width="1" height="19" fill="#dadada"/>
<rect x="656" y="214" width="1" height="19" fill="#dadada"/>
<rect x="737" y="214" width="1" height="19" fill="#dadada"/>
<rect x="824" y="214" width="1" height="19" fill="#dadada"/>
<rect x="989" y="214" width="1" height="19" fill="#dadada"/>
<rect x="1097" y="214" width="1" height="19" fill="#dadada"/>
<rect x="1179" y="214" width="1" height="19" fill="#dadada"/>
<rect x="1311" y="214" width="1" height="19" fill="#dadada"/>
<rect x="14" y="214" width="1" height="19" fill="#c6c6c6"/>
<rect x="0" y="233" width="1391" height="1" fill="#b0b0b0"/>
<rect x="0" y="253" width="14" height="1" fill="#d8d8d8"/>
<rect x="0" y="273" width="14" height="1" fill="#d8d8d8"/>
<rect x="0" y="293" width="14" height="1" fill="#d8d8d8"/>
<rect x="0" y="313" width="14" height="1" fill="#d8d8d8"/>
<rect x="0" y="333" width="14" height="1" fill="#d8d8d8"/>
<rect x="0" y="353" width="14" height="1" fill="#d8d8d8"/>
<rect x="0" y="373" width="14" height="1" fill="#d8d8d8"/>
<rect x="0" y="393" width="14" height="1" fill="#d8d8d8"/>
<rect x="0" y="413" width="14" height="1" fill="#d8d8d8"/>
<rect x="0" y="433" width="14" height="1" fill="#d8d8d8"/>
<rect x="0" y="453" width="14" height="1" fill="#d8d8d8"/>
<rect x="0" y="473" width="14" height="1" fill="#d8d8d8"/>
<rect x="0" y="493" width="14" height="1" fill="#d8d8d8"/>
<rect x="0" y="513" width="14" height="1" fill="#d8d8d8"/>
<rect x="0" y="533" width="14" height="1" fill="#d8d8d8"/>
<rect x="0" y="553" width="14" height="1" fill="#d8d8d8"/>
<rect x="0" y="573" width="14" height="1" fill="#d8d8d8"/>
<rect x="0" y="593" width="14" height="1" fill="#d8d8d8"/>
<rect x="0" y="613" width="14" height="1" fill="#d8d8d8"/>
<rect x="0" y="633" width="14" height="1" fill="#d8d8d8"/>
<rect x="0" y="653" width="14" height="1" fill="#d8d8d8"/>
<rect x="0" y="673" width="14" height="1" fill="#d8d8d8"/>
<rect x="14" y="233" width="1" height="452" fill="#c6c6c6"/>
<text x="44.48" y="227.80" font-size="12" fill="#107c41">A</text>
<text x="139.51" y="227.80" font-size="12" fill="#424242">B</text>
<text x="244.18" y="227.80" font-size="12" fill="#424242">C</text>
<text x="346.68" y="227.80" font-size="12" fill="#424242">D</text>
<text x="464.01" y="227.80" font-size="12" fill="#424242">E</text>
<text x="587.84" y="227.80" font-size="12" fill="#424242">F</text>
<text x="692.32" y="227.80" font-size="12" fill="#424242">G</text>
<text x="776.68" y="227.80" font-size="12" fill="#424242">H</text>
<text x="905.32" y="227.80" font-size="12" fill="#424242">I</text>
<text x="1040.50" y="227.80" font-size="12" fill="#424242">J</text>
<text x="1134.51" y="227.80" font-size="12" fill="#424242">K</text>
<text x="1242.17" y="227.80" font-size="12" fill="#424242">L</text>
<text x="1360.49" y="227.80" font-size="12" fill="#424242">M</text>
<g clip-path="url(#rhclip)">
<text x="5.4" y="249" font-size="12.5" fill="#107c41" text-anchor="end">1</text>
<text x="5.4" y="269" font-size="12.5" fill="#424242" text-anchor="end">2</text>
<text x="5.4" y="289" font-size="12.5" fill="#424242" text-anchor="end">3</text>
<text x="5.4" y="309" font-size="12.5" fill="#424242" text-anchor="end">4</text>
<text x="5.4" y="329" font-size="12.5" fill="#424242" text-anchor="end">5</text>
<text x="5.4" y="349" font-size="12.5" fill="#424242" text-anchor="end">6</text>
<text x="5.4" y="369" font-size="12.5" fill="#424242" text-anchor="end">7</text>
<text x="5.4" y="389" font-size="12.5" fill="#424242" text-anchor="end">8</text>
<text x="5.4" y="409" font-size="12.5" fill="#424242" text-anchor="end">9</text>
<text x="9.2" y="429" font-size="12.5" fill="#424242" text-anchor="end">0</text>
<text x="9.2" y="449" font-size="12.5" fill="#424242" text-anchor="end">1</text>
<text x="9.2" y="469" font-size="12.5" fill="#424242" text-anchor="end">2</text>
<text x="9.2" y="489" font-size="12.5" fill="#424242" text-anchor="end">3</text>
<text x="9.2" y="509" font-size="12.5" fill="#424242" text-anchor="end">4</text>
<text x="9.2" y="529" font-size="12.5" fill="#424242" text-anchor="end">5</text>
<text x="9.2" y="549" font-size="12.5" fill="#424242" text-anchor="end">6</text>
<text x="9.2" y="569" font-size="12.5" fill="#424242" text-anchor="end">7</text>
<text x="9.2" y="589" font-size="12.5" fill="#424242" text-anchor="end">8</text>
<text x="9.2" y="609" font-size="12.5" fill="#424242" text-anchor="end">9</text>
<text x="9.2" y="629" font-size="12.5" fill="#424242" text-anchor="end">20</text>
<text x="9.2" y="649" font-size="12.5" fill="#424242" text-anchor="end">21</text>
<text x="9.2" y="669" font-size="12.5" fill="#424242" text-anchor="end">22</text>
<text x="9.2" y="689" font-size="12.5" fill="#424242" text-anchor="end">23</text>
</g>
<rect x="82" y="234" width="1" height="420" fill="#000"/>
<rect x="204" y="234" width="1" height="420" fill="#000"/>
<rect x="292" y="234" width="1" height="420" fill="#000"/>
<rect x="409" y="234" width="1" height="420" fill="#000"/>
<rect x="526" y="234" width="1" height="420" fill="#000"/>
<rect x="656" y="234" width="1" height="420" fill="#000"/>
<rect x="737" y="234" width="1" height="420" fill="#000"/>
<rect x="824" y="234" width="1" height="420" fill="#000"/>
<rect x="989" y="234" width="1" height="420" fill="#000"/>
<rect x="1097" y="234" width="1" height="420" fill="#000"/>
<rect x="1179" y="234" width="1" height="420" fill="#000"/>
<rect x="1311" y="234" width="1" height="420" fill="#000"/>
<rect x="15" y="253" width="1376" height="1" fill="#000"/>
<rect x="15" y="273" width="1376" height="1" fill="#000"/>
<rect x="15" y="293" width="1376" height="1" fill="#000"/>
<rect x="15" y="313" width="1376" height="1" fill="#000"/>
<rect x="15" y="333" width="1376" height="1" fill="#000"/>
<rect x="15" y="353" width="1376" height="1" fill="#000"/>
<rect x="15" y="373" width="1376" height="1" fill="#000"/>
<rect x="15" y="393" width="1376" height="1" fill="#000"/>
<rect x="15" y="413" width="1376" height="1" fill="#000"/>
<rect x="15" y="433" width="1376" height="1" fill="#000"/>
<rect x="15" y="453" width="1376" height="1" fill="#000"/>
<rect x="15" y="473" width="1376" height="1" fill="#000"/>
<rect x="15" y="493" width="1376" height="1" fill="#000"/>
<rect x="15" y="513" width="1376" height="1" fill="#000"/>
<rect x="15" y="533" width="1376" height="1" fill="#000"/>
<rect x="15" y="553" width="1376" height="1" fill="#000"/>
<rect x="15" y="573" width="1376" height="1" fill="#000"/>
<rect x="15" y="593" width="1376" height="1" fill="#000"/>
<rect x="15" y="613" width="1376" height="1" fill="#000"/>
<rect x="15" y="633" width="1376" height="1" fill="#000"/>
<rect x="15" y="653" width="1376" height="1" fill="#000"/>
<g clip-path="url(#gridclip)" stroke="#000" stroke-width="0.12">
<text x="17.60" y="249.00" font-size="13.9" fill="#000000" font-weight="bold" textLength="58.17" lengthAdjust="spacingAndGlyphs">PLS-DWG</text>
<text x="85.60" y="249.00" font-size="13.9" fill="#000000" font-weight="bold" textLength="60.24" lengthAdjust="spacingAndGlyphs">PLS-TYPE</text>
<text x="207.60" y="249.00" font-size="13.9" fill="#000000" font-weight="bold" textLength="79.40" lengthAdjust="spacingAndGlyphs">PLS-HANDLE</text>
<text x="295.60" y="249.00" font-size="13.9" fill="#000000" font-weight="bold" textLength="102.00" lengthAdjust="spacingAndGlyphs">PLS-POSITION_X</text>
<text x="412.60" y="249.00" font-size="13.9" fill="#000000" font-weight="bold" textLength="102.00" lengthAdjust="spacingAndGlyphs">PLS-POSITION_Y</text>
<text x="529.60" y="249.00" font-size="13.9" fill="#000000" font-weight="bold" textLength="106.10" lengthAdjust="spacingAndGlyphs">PLS-NAME_BLOC</text>
<text x="659.60" y="249.00" font-size="13.9" fill="#000000" font-weight="bold" textLength="72.55" lengthAdjust="spacingAndGlyphs">PLS-COLOR</text>
<text x="740.60" y="249.00" font-size="13.9" fill="#000000" font-weight="bold" textLength="68.69" lengthAdjust="spacingAndGlyphs">PLS-LAYER</text>
<text x="827.60" y="249.00" font-size="13.9" fill="#000000" font-weight="bold" textLength="151.27" lengthAdjust="spacingAndGlyphs">PLS-DESCRIPTION-BLOC</text>
<text x="992.60" y="249.00" font-size="13.9" fill="#000000" font-weight="bold" textLength="99.95" lengthAdjust="spacingAndGlyphs">PLS-PUISSANCE</text>
<text x="1100.60" y="249.00" font-size="13.9" fill="#000000" font-weight="bold" textLength="74.61" lengthAdjust="spacingAndGlyphs">PLS-NIVEAU</text>
<text x="1182.60" y="249.00" font-size="13.9" fill="#000000" font-weight="bold" textLength="123.22" lengthAdjust="spacingAndGlyphs">PLS-PUBLIC-PRIVEE</text>
<text x="1314.60" y="249.00" font-size="13.9" fill="#000000" font-weight="bold" textLength="100.39" lengthAdjust="spacingAndGlyphs">PLS-CATEGORIE</text>
<text x="17.60" y="269.00" font-size="13.9" fill="#000000" textLength="38.55" lengthAdjust="spacingAndGlyphs">DWG 1</text>
<text x="85.60" y="269.00" font-size="13.9" fill="#000000" textLength="114.04" lengthAdjust="spacingAndGlyphs">ATTRIBUTS_MODEL</text>
<text x="207.60" y="269.00" font-size="13.9" fill="#000000" textLength="51.67" lengthAdjust="spacingAndGlyphs">2335BD2</text>
<text x="295.60" y="269.00" font-size="13.9" fill="#000000" textLength="108.25" lengthAdjust="spacingAndGlyphs">103078.770285906</text>
<text x="412.60" y="269.00" font-size="13.9" fill="#000000" textLength="101.95" lengthAdjust="spacingAndGlyphs">1600.9921745924</text>
<text x="529.60" y="269.00" font-size="13.9" fill="#000000" textLength="121.94" lengthAdjust="spacingAndGlyphs">4BUTTONSEETOUCH</text>
<text x="659.60" y="269.00" font-size="13.9" fill="#000000" textLength="50.20" lengthAdjust="spacingAndGlyphs">BYLAYER</text>
<text x="740.60" y="269.00" font-size="13.9" fill="#000000" textLength="79.66" lengthAdjust="spacingAndGlyphs">PLS-06-2-CFA</text>
<text x="827.60" y="269.00" font-size="13.9" fill="#000000" textLength="130.50" lengthAdjust="spacingAndGlyphs">ECL - Commande KNX</text>
<text x="992.60" y="269.00" font-size="13.9" fill="#000000" textLength="14.17" lengthAdjust="spacingAndGlyphs">1u</text>
<text x="1100.60" y="269.00" font-size="13.9" fill="#000000" textLength="52.55" lengthAdjust="spacingAndGlyphs">Sous-Sol</text>
<text x="1182.60" y="269.00" font-size="13.9" fill="#000000" textLength="3.50" lengthAdjust="spacingAndGlyphs">/</text>
<text x="17.60" y="289.00" font-size="13.9" fill="#000000" textLength="38.55" lengthAdjust="spacingAndGlyphs">DWG 1</text>
<text x="85.60" y="289.00" font-size="13.9" fill="#000000" textLength="114.04" lengthAdjust="spacingAndGlyphs">ATTRIBUTS_MODEL</text>
<text x="207.60" y="289.00" font-size="13.9" fill="#000000" textLength="50.29" lengthAdjust="spacingAndGlyphs">2335D72</text>
<text x="295.60" y="289.00" font-size="13.9" fill="#000000" textLength="108.25" lengthAdjust="spacingAndGlyphs">103516.028996733</text>
<text x="412.60" y="289.00" font-size="13.9" fill="#000000" textLength="101.95" lengthAdjust="spacingAndGlyphs">1600.9921745924</text>
<text x="529.60" y="289.00" font-size="13.9" fill="#000000" textLength="121.94" lengthAdjust="spacingAndGlyphs">4BUTTONSEETOUCH</text>
<text x="659.60" y="289.00" font-size="13.9" fill="#000000" textLength="50.20" lengthAdjust="spacingAndGlyphs">BYLAYER</text>
<text x="740.60" y="289.00" font-size="13.9" fill="#000000" textLength="79.66" lengthAdjust="spacingAndGlyphs">PLS-06-2-CFA</text>
<text x="827.60" y="289.00" font-size="13.9" fill="#000000" textLength="130.50" lengthAdjust="spacingAndGlyphs">ECL - Commande KNX</text>
<text x="992.60" y="289.00" font-size="13.9" fill="#000000" textLength="14.17" lengthAdjust="spacingAndGlyphs">1u</text>
<text x="1100.60" y="289.00" font-size="13.9" fill="#000000" textLength="52.55" lengthAdjust="spacingAndGlyphs">Sous-Sol</text>
<text x="1182.60" y="289.00" font-size="13.9" fill="#000000" textLength="3.50" lengthAdjust="spacingAndGlyphs">/</text>
<text x="17.60" y="309.00" font-size="13.9" fill="#000000" textLength="38.55" lengthAdjust="spacingAndGlyphs">DWG 1</text>
<text x="85.60" y="309.00" font-size="13.9" fill="#000000" textLength="114.04" lengthAdjust="spacingAndGlyphs">ATTRIBUTS_MODEL</text>
<text x="207.60" y="309.00" font-size="13.9" fill="#000000" textLength="50.29" lengthAdjust="spacingAndGlyphs">2335D92</text>
<text x="295.60" y="309.00" font-size="13.9" fill="#000000" textLength="101.27" lengthAdjust="spacingAndGlyphs">103975.96886497</text>
<text x="412.60" y="309.00" font-size="13.9" fill="#000000" textLength="101.95" lengthAdjust="spacingAndGlyphs">1600.9921745924</text>
<text x="529.60" y="309.00" font-size="13.9" fill="#000000" textLength="121.94" lengthAdjust="spacingAndGlyphs">4BUTTONSEETOUCH</text>
<text x="659.60" y="309.00" font-size="13.9" fill="#000000" textLength="50.20" lengthAdjust="spacingAndGlyphs">BYLAYER</text>
<text x="740.60" y="309.00" font-size="13.9" fill="#000000" textLength="79.66" lengthAdjust="spacingAndGlyphs">PLS-06-2-CFA</text>
<text x="827.60" y="309.00" font-size="13.9" fill="#000000" textLength="130.50" lengthAdjust="spacingAndGlyphs">ECL - Commande KNX</text>
<text x="992.60" y="309.00" font-size="13.9" fill="#000000" textLength="14.17" lengthAdjust="spacingAndGlyphs">1u</text>
<text x="1100.60" y="309.00" font-size="13.9" fill="#000000" textLength="52.55" lengthAdjust="spacingAndGlyphs">Sous-Sol</text>
<text x="1182.60" y="309.00" font-size="13.9" fill="#000000" textLength="3.50" lengthAdjust="spacingAndGlyphs">/</text>
<text x="17.60" y="329.00" font-size="13.9" fill="#000000" textLength="38.55" lengthAdjust="spacingAndGlyphs">DWG 1</text>
<text x="85.60" y="329.00" font-size="13.9" fill="#000000" textLength="114.04" lengthAdjust="spacingAndGlyphs">ATTRIBUTS_MODEL</text>
<text x="207.60" y="329.00" font-size="13.9" fill="#000000" textLength="51.67" lengthAdjust="spacingAndGlyphs">2335DB2</text>
<text x="295.60" y="329.00" font-size="13.9" fill="#000000" textLength="108.25" lengthAdjust="spacingAndGlyphs">104416.579236841</text>
<text x="412.60" y="329.00" font-size="13.9" fill="#000000" textLength="101.95" lengthAdjust="spacingAndGlyphs">1600.9921745924</text>
<text x="529.60" y="329.00" font-size="13.9" fill="#000000" textLength="121.94" lengthAdjust="spacingAndGlyphs">4BUTTONSEETOUCH</text>
<text x="659.60" y="329.00" font-size="13.9" fill="#000000" textLength="50.20" lengthAdjust="spacingAndGlyphs">BYLAYER</text>
<text x="740.60" y="329.00" font-size="13.9" fill="#000000" textLength="79.66" lengthAdjust="spacingAndGlyphs">PLS-06-2-CFA</text>
<text x="827.60" y="329.00" font-size="13.9" fill="#000000" textLength="130.50" lengthAdjust="spacingAndGlyphs">ECL - Commande KNX</text>
<text x="992.60" y="329.00" font-size="13.9" fill="#000000" textLength="14.17" lengthAdjust="spacingAndGlyphs">1u</text>
<text x="1100.60" y="329.00" font-size="13.9" fill="#000000" textLength="52.55" lengthAdjust="spacingAndGlyphs">Sous-Sol</text>
<text x="1182.60" y="329.00" font-size="13.9" fill="#000000" textLength="3.50" lengthAdjust="spacingAndGlyphs">/</text>
<text x="17.60" y="349.00" font-size="13.9" fill="#000000" textLength="38.55" lengthAdjust="spacingAndGlyphs">DWG 1</text>
<text x="85.60" y="349.00" font-size="13.9" fill="#000000" textLength="114.04" lengthAdjust="spacingAndGlyphs">ATTRIBUTS_MODEL</text>
<text x="207.60" y="349.00" font-size="13.9" fill="#000000" textLength="50.97" lengthAdjust="spacingAndGlyphs">2335DF1</text>
<text x="295.60" y="349.00" font-size="13.9" fill="#000000" textLength="108.25" lengthAdjust="spacingAndGlyphs">105527.568862714</text>
<text x="412.60" y="349.00" font-size="13.9" fill="#000000" textLength="108.98" lengthAdjust="spacingAndGlyphs">1609.08264331793</text>
<text x="529.60" y="349.00" font-size="13.9" fill="#000000" textLength="121.94" lengthAdjust="spacingAndGlyphs">4BUTTONSEETOUCH</text>
<text x="659.60" y="349.00" font-size="13.9" fill="#000000" textLength="50.20" lengthAdjust="spacingAndGlyphs">BYLAYER</text>
<text x="740.60" y="349.00" font-size="13.9" fill="#000000" textLength="79.66" lengthAdjust="spacingAndGlyphs">PLS-06-2-CFA</text>
<text x="827.60" y="349.00" font-size="13.9" fill="#000000" textLength="130.50" lengthAdjust="spacingAndGlyphs">ECL - Commande KNX</text>
<text x="992.60" y="349.00" font-size="13.9" fill="#000000" textLength="14.17" lengthAdjust="spacingAndGlyphs">1u</text>
<text x="1100.60" y="349.00" font-size="13.9" fill="#000000" textLength="52.55" lengthAdjust="spacingAndGlyphs">Sous-Sol</text>
<text x="1182.60" y="349.00" font-size="13.9" fill="#000000" textLength="3.50" lengthAdjust="spacingAndGlyphs">/</text>
<text x="17.60" y="369.00" font-size="13.9" fill="#000000" textLength="38.55" lengthAdjust="spacingAndGlyphs">DWG 1</text>
<text x="85.60" y="369.00" font-size="13.9" fill="#000000" textLength="114.04" lengthAdjust="spacingAndGlyphs">ATTRIBUTS_MODEL</text>
<text x="207.60" y="369.00" font-size="13.9" fill="#000000" textLength="49.61" lengthAdjust="spacingAndGlyphs">2335E30</text>
<text x="295.60" y="369.00" font-size="13.9" fill="#000000" textLength="101.27" lengthAdjust="spacingAndGlyphs">103179.48462665</text>
<text x="412.60" y="369.00" font-size="13.9" fill="#000000" textLength="108.98" lengthAdjust="spacingAndGlyphs">942.789340875938</text>
<text x="529.60" y="369.00" font-size="13.9" fill="#000000" textLength="121.94" lengthAdjust="spacingAndGlyphs">4BUTTONSEETOUCH</text>
<text x="659.60" y="369.00" font-size="13.9" fill="#000000" textLength="50.20" lengthAdjust="spacingAndGlyphs">BYLAYER</text>
<text x="740.60" y="369.00" font-size="13.9" fill="#000000" textLength="79.66" lengthAdjust="spacingAndGlyphs">PLS-06-2-CFA</text>
<text x="827.60" y="369.00" font-size="13.9" fill="#000000" textLength="130.50" lengthAdjust="spacingAndGlyphs">ECL - Commande KNX</text>
<text x="992.60" y="369.00" font-size="13.9" fill="#000000" textLength="14.17" lengthAdjust="spacingAndGlyphs">1u</text>
<text x="1100.60" y="369.00" font-size="13.9" fill="#000000" textLength="52.55" lengthAdjust="spacingAndGlyphs">Sous-Sol</text>
<text x="1182.60" y="369.00" font-size="13.9" fill="#000000" textLength="3.50" lengthAdjust="spacingAndGlyphs">/</text>
<text x="17.60" y="389.00" font-size="13.9" fill="#000000" textLength="38.55" lengthAdjust="spacingAndGlyphs">DWG 1</text>
<text x="85.60" y="389.00" font-size="13.9" fill="#000000" textLength="114.04" lengthAdjust="spacingAndGlyphs">ATTRIBUTS_MODEL</text>
<text x="207.60" y="389.00" font-size="13.9" fill="#000000" textLength="49.61" lengthAdjust="spacingAndGlyphs">2335E50</text>
<text x="295.60" y="389.00" font-size="13.9" fill="#000000" textLength="108.25" lengthAdjust="spacingAndGlyphs">103576.684766658</text>
<text x="412.60" y="389.00" font-size="13.9" fill="#000000" textLength="108.98" lengthAdjust="spacingAndGlyphs">942.789340875938</text>
<text x="529.60" y="389.00" font-size="13.9" fill="#000000" textLength="121.94" lengthAdjust="spacingAndGlyphs">4BUTTONSEETOUCH</text>
<text x="659.60" y="389.00" font-size="13.9" fill="#000000" textLength="50.20" lengthAdjust="spacingAndGlyphs">BYLAYER</text>
<text x="740.60" y="389.00" font-size="13.9" fill="#000000" textLength="79.66" lengthAdjust="spacingAndGlyphs">PLS-06-2-CFA</text>
<text x="827.60" y="389.00" font-size="13.9" fill="#000000" textLength="130.50" lengthAdjust="spacingAndGlyphs">ECL - Commande KNX</text>
<text x="992.60" y="389.00" font-size="13.9" fill="#000000" textLength="14.17" lengthAdjust="spacingAndGlyphs">1u</text>
<text x="1100.60" y="389.00" font-size="13.9" fill="#000000" textLength="52.55" lengthAdjust="spacingAndGlyphs">Sous-Sol</text>
<text x="1182.60" y="389.00" font-size="13.9" fill="#000000" textLength="3.50" lengthAdjust="spacingAndGlyphs">/</text>
<text x="17.60" y="409.00" font-size="13.9" fill="#000000" textLength="38.55" lengthAdjust="spacingAndGlyphs">DWG 1</text>
<text x="85.60" y="409.00" font-size="13.9" fill="#000000" textLength="114.04" lengthAdjust="spacingAndGlyphs">ATTRIBUTS_MODEL</text>
<text x="207.60" y="409.00" font-size="13.9" fill="#000000" textLength="49.61" lengthAdjust="spacingAndGlyphs">2335E70</text>
<text x="295.60" y="409.00" font-size="13.9" fill="#000000" textLength="108.25" lengthAdjust="spacingAndGlyphs">103997.760080076</text>
<text x="412.60" y="409.00" font-size="13.9" fill="#000000" textLength="108.98" lengthAdjust="spacingAndGlyphs">942.870715633454</text>
<text x="529.60" y="409.00" font-size="13.9" fill="#000000" textLength="121.94" lengthAdjust="spacingAndGlyphs">4BUTTONSEETOUCH</text>
<text x="659.60" y="409.00" font-size="13.9" fill="#000000" textLength="50.20" lengthAdjust="spacingAndGlyphs">BYLAYER</text>
<text x="740.60" y="409.00" font-size="13.9" fill="#000000" textLength="79.66" lengthAdjust="spacingAndGlyphs">PLS-06-2-CFA</text>
<text x="827.60" y="409.00" font-size="13.9" fill="#000000" textLength="130.50" lengthAdjust="spacingAndGlyphs">ECL - Commande KNX</text>
<text x="992.60" y="409.00" font-size="13.9" fill="#000000" textLength="14.17" lengthAdjust="spacingAndGlyphs">1u</text>
<text x="1100.60" y="409.00" font-size="13.9" fill="#000000" textLength="52.55" lengthAdjust="spacingAndGlyphs">Sous-Sol</text>
<text x="1182.60" y="409.00" font-size="13.9" fill="#000000" textLength="3.50" lengthAdjust="spacingAndGlyphs">/</text>
<text x="17.60" y="429.00" font-size="13.9" fill="#000000" textLength="38.55" lengthAdjust="spacingAndGlyphs">DWG 1</text>
<text x="85.60" y="429.00" font-size="13.9" fill="#000000" textLength="114.04" lengthAdjust="spacingAndGlyphs">ATTRIBUTS_MODEL</text>
<text x="207.60" y="429.00" font-size="13.9" fill="#000000" textLength="49.61" lengthAdjust="spacingAndGlyphs">2335E90</text>
<text x="295.60" y="429.00" font-size="13.9" fill="#000000" textLength="108.25" lengthAdjust="spacingAndGlyphs">104392.130486928</text>
<text x="412.60" y="429.00" font-size="13.9" fill="#000000" textLength="108.98" lengthAdjust="spacingAndGlyphs">942.870715633454</text>
<text x="529.60" y="429.00" font-size="13.9" fill="#000000" textLength="121.94" lengthAdjust="spacingAndGlyphs">4BUTTONSEETOUCH</text>
<text x="659.60" y="429.00" font-size="13.9" fill="#000000" textLength="50.20" lengthAdjust="spacingAndGlyphs">BYLAYER</text>
<text x="740.60" y="429.00" font-size="13.9" fill="#000000" textLength="79.66" lengthAdjust="spacingAndGlyphs">PLS-06-2-CFA</text>
<text x="827.60" y="429.00" font-size="13.9" fill="#000000" textLength="130.50" lengthAdjust="spacingAndGlyphs">ECL - Commande KNX</text>
<text x="992.60" y="429.00" font-size="13.9" fill="#000000" textLength="14.17" lengthAdjust="spacingAndGlyphs">1u</text>
<text x="1100.60" y="429.00" font-size="13.9" fill="#000000" textLength="52.55" lengthAdjust="spacingAndGlyphs">Sous-Sol</text>
<text x="1182.60" y="429.00" font-size="13.9" fill="#000000" textLength="3.50" lengthAdjust="spacingAndGlyphs">/</text>
<text x="17.60" y="449.00" font-size="13.9" fill="#000000" textLength="38.55" lengthAdjust="spacingAndGlyphs">DWG 1</text>
<text x="85.60" y="449.00" font-size="13.9" fill="#000000" textLength="114.04" lengthAdjust="spacingAndGlyphs">ATTRIBUTS_MODEL</text>
<text x="207.60" y="449.00" font-size="13.9" fill="#000000" textLength="50.98" lengthAdjust="spacingAndGlyphs">2335EB0</text>
<text x="295.60" y="449.00" font-size="13.9" fill="#000000" textLength="108.25" lengthAdjust="spacingAndGlyphs">104792.326868408</text>
<text x="412.60" y="449.00" font-size="13.9" fill="#000000" textLength="108.98" lengthAdjust="spacingAndGlyphs">942.870715633454</text>
<text x="529.60" y="449.00" font-size="13.9" fill="#000000" textLength="121.94" lengthAdjust="spacingAndGlyphs">4BUTTONSEETOUCH</text>
<text x="659.60" y="449.00" font-size="13.9" fill="#000000" textLength="50.20" lengthAdjust="spacingAndGlyphs">BYLAYER</text>
<text x="740.60" y="449.00" font-size="13.9" fill="#000000" textLength="79.66" lengthAdjust="spacingAndGlyphs">PLS-06-2-CFA</text>
<text x="827.60" y="449.00" font-size="13.9" fill="#000000" textLength="130.50" lengthAdjust="spacingAndGlyphs">ECL - Commande KNX</text>
<text x="992.60" y="449.00" font-size="13.9" fill="#000000" textLength="14.17" lengthAdjust="spacingAndGlyphs">1u</text>
<text x="1100.60" y="449.00" font-size="13.9" fill="#000000" textLength="52.55" lengthAdjust="spacingAndGlyphs">Sous-Sol</text>
<text x="1182.60" y="449.00" font-size="13.9" fill="#000000" textLength="3.50" lengthAdjust="spacingAndGlyphs">/</text>
<text x="17.60" y="469.00" font-size="13.9" fill="#000000" textLength="38.55" lengthAdjust="spacingAndGlyphs">DWG 1</text>
<text x="85.60" y="469.00" font-size="13.9" fill="#000000" textLength="114.04" lengthAdjust="spacingAndGlyphs">ATTRIBUTS_MODEL</text>
<text x="207.60" y="469.00" font-size="13.9" fill="#000000" textLength="51.67" lengthAdjust="spacingAndGlyphs">2335ED0</text>
<text x="295.60" y="469.00" font-size="13.9" fill="#000000" textLength="108.25" lengthAdjust="spacingAndGlyphs">105231.692666297</text>
<text x="412.60" y="469.00" font-size="13.9" fill="#000000" textLength="108.98" lengthAdjust="spacingAndGlyphs">942.870715633454</text>
<text x="529.60" y="469.00" font-size="13.9" fill="#000000" textLength="121.94" lengthAdjust="spacingAndGlyphs">4BUTTONSEETOUCH</text>
<text x="659.60" y="469.00" font-size="13.9" fill="#000000" textLength="50.20" lengthAdjust="spacingAndGlyphs">BYLAYER</text>
<text x="740.60" y="469.00" font-size="13.9" fill="#000000" textLength="79.66" lengthAdjust="spacingAndGlyphs">PLS-06-2-CFA</text>
<text x="827.60" y="469.00" font-size="13.9" fill="#000000" textLength="130.50" lengthAdjust="spacingAndGlyphs">ECL - Commande KNX</text>
<text x="992.60" y="469.00" font-size="13.9" fill="#000000" textLength="14.17" lengthAdjust="spacingAndGlyphs">1u</text>
<text x="1100.60" y="469.00" font-size="13.9" fill="#000000" textLength="52.55" lengthAdjust="spacingAndGlyphs">Sous-Sol</text>
<text x="1182.60" y="469.00" font-size="13.9" fill="#000000" textLength="3.50" lengthAdjust="spacingAndGlyphs">/</text>
<text x="17.60" y="489.00" font-size="13.9" fill="#000000" textLength="38.55" lengthAdjust="spacingAndGlyphs">DWG 1</text>
<text x="85.60" y="489.00" font-size="13.9" fill="#000000" textLength="114.04" lengthAdjust="spacingAndGlyphs">ATTRIBUTS_MODEL</text>
<text x="207.60" y="489.00" font-size="13.9" fill="#000000" textLength="50.98" lengthAdjust="spacingAndGlyphs">2342AA9</text>
<text x="295.60" y="489.00" font-size="13.9" fill="#000000" textLength="108.25" lengthAdjust="spacingAndGlyphs">105607.535541384</text>
<text x="412.60" y="489.00" font-size="13.9" fill="#000000" textLength="108.98" lengthAdjust="spacingAndGlyphs">942.870715633454</text>
<text x="529.60" y="489.00" font-size="13.9" fill="#000000" textLength="121.94" lengthAdjust="spacingAndGlyphs">4BUTTONSEETOUCH</text>
<text x="659.60" y="489.00" font-size="13.9" fill="#000000" textLength="50.20" lengthAdjust="spacingAndGlyphs">BYLAYER</text>
<text x="740.60" y="489.00" font-size="13.9" fill="#000000" textLength="79.66" lengthAdjust="spacingAndGlyphs">PLS-06-2-CFA</text>
<text x="827.60" y="489.00" font-size="13.9" fill="#000000" textLength="130.50" lengthAdjust="spacingAndGlyphs">ECL - Commande KNX</text>
<text x="992.60" y="489.00" font-size="13.9" fill="#000000" textLength="14.17" lengthAdjust="spacingAndGlyphs">1u</text>
<text x="1100.60" y="489.00" font-size="13.9" fill="#000000" textLength="52.55" lengthAdjust="spacingAndGlyphs">Sous-Sol</text>
<text x="1182.60" y="489.00" font-size="13.9" fill="#000000" textLength="3.50" lengthAdjust="spacingAndGlyphs">/</text>
<text x="17.60" y="509.00" font-size="13.9" fill="#000000" textLength="38.55" lengthAdjust="spacingAndGlyphs">DWG 1</text>
<text x="85.60" y="509.00" font-size="13.9" fill="#000000" textLength="114.04" lengthAdjust="spacingAndGlyphs">ATTRIBUTS_MODEL</text>
<text x="207.60" y="509.00" font-size="13.9" fill="#000000" textLength="50.98" lengthAdjust="spacingAndGlyphs">2342AE1</text>
<text x="295.60" y="509.00" font-size="13.9" fill="#000000" textLength="108.25" lengthAdjust="spacingAndGlyphs">105177.462383389</text>
<text x="412.60" y="509.00" font-size="13.9" fill="#000000" textLength="108.98" lengthAdjust="spacingAndGlyphs">1609.08264331793</text>
<text x="529.60" y="509.00" font-size="13.9" fill="#000000" textLength="121.94" lengthAdjust="spacingAndGlyphs">4BUTTONSEETOUCH</text>
<text x="659.60" y="509.00" font-size="13.9" fill="#000000" textLength="50.20" lengthAdjust="spacingAndGlyphs">BYLAYER</text>
<text x="740.60" y="509.00" font-size="13.9" fill="#000000" textLength="79.66" lengthAdjust="spacingAndGlyphs">PLS-06-2-CFA</text>
<text x="827.60" y="509.00" font-size="13.9" fill="#000000" textLength="130.50" lengthAdjust="spacingAndGlyphs">ECL - Commande KNX</text>
<text x="992.60" y="509.00" font-size="13.9" fill="#000000" textLength="14.17" lengthAdjust="spacingAndGlyphs">1u</text>
<text x="1100.60" y="509.00" font-size="13.9" fill="#000000" textLength="52.55" lengthAdjust="spacingAndGlyphs">Sous-Sol</text>
<text x="1182.60" y="509.00" font-size="13.9" fill="#000000" textLength="3.50" lengthAdjust="spacingAndGlyphs">/</text>
<text x="17.60" y="529.00" font-size="13.9" fill="#000000" textLength="38.55" lengthAdjust="spacingAndGlyphs">DWG 1</text>
<text x="85.60" y="529.00" font-size="13.9" fill="#000000" textLength="114.04" lengthAdjust="spacingAndGlyphs">ATTRIBUTS_MODEL</text>
<text x="207.60" y="529.00" font-size="13.9" fill="#000000" textLength="49.61" lengthAdjust="spacingAndGlyphs">2342B07</text>
<text x="295.60" y="529.00" font-size="13.9" fill="#000000" textLength="108.25" lengthAdjust="spacingAndGlyphs">104831.657828921</text>
<text x="412.60" y="529.00" font-size="13.9" fill="#000000" textLength="101.95" lengthAdjust="spacingAndGlyphs">1600.9921745924</text>
<text x="529.60" y="529.00" font-size="13.9" fill="#000000" textLength="121.94" lengthAdjust="spacingAndGlyphs">4BUTTONSEETOUCH</text>
<text x="659.60" y="529.00" font-size="13.9" fill="#000000" textLength="50.20" lengthAdjust="spacingAndGlyphs">BYLAYER</text>
<text x="740.60" y="529.00" font-size="13.9" fill="#000000" textLength="79.66" lengthAdjust="spacingAndGlyphs">PLS-06-2-CFA</text>
<text x="827.60" y="529.00" font-size="13.9" fill="#000000" textLength="130.50" lengthAdjust="spacingAndGlyphs">ECL - Commande KNX</text>
<text x="992.60" y="529.00" font-size="13.9" fill="#000000" textLength="14.17" lengthAdjust="spacingAndGlyphs">1u</text>
<text x="1100.60" y="529.00" font-size="13.9" fill="#000000" textLength="52.55" lengthAdjust="spacingAndGlyphs">Sous-Sol</text>
<text x="1182.60" y="529.00" font-size="13.9" fill="#000000" textLength="3.50" lengthAdjust="spacingAndGlyphs">/</text>
<text x="17.60" y="549.00" font-size="13.9" fill="#000000" textLength="38.55" lengthAdjust="spacingAndGlyphs">DWG 1</text>
<text x="85.60" y="549.00" font-size="13.9" fill="#000000" textLength="114.04" lengthAdjust="spacingAndGlyphs">ATTRIBUTS_MODEL</text>
<text x="207.60" y="549.00" font-size="13.9" fill="#000000" textLength="49.61" lengthAdjust="spacingAndGlyphs">2334E38</text>
<text x="295.60" y="549.00" font-size="13.9" fill="#000000" textLength="108.25" lengthAdjust="spacingAndGlyphs">81830.6594966837</text>
<text x="412.60" y="549.00" font-size="13.9" fill="#000000" textLength="107.10" lengthAdjust="spacingAndGlyphs">1110.50560448987</text>
<text x="529.60" y="549.00" font-size="13.9" fill="#000000" textLength="75.03" lengthAdjust="spacingAndGlyphs">A$C11f8523a</text>
<text x="659.60" y="549.00" font-size="13.9" fill="#000000" textLength="50.20" lengthAdjust="spacingAndGlyphs">BYLAYER</text>
<text x="739.50" y="549.00" font-size="13.9" fill="#000000" textLength="6.81" lengthAdjust="spacingAndGlyphs">0</text>
<text x="17.60" y="569.00" font-size="13.9" fill="#000000" textLength="38.55" lengthAdjust="spacingAndGlyphs">DWG 1</text>
<text x="85.60" y="569.00" font-size="13.9" fill="#000000" textLength="114.04" lengthAdjust="spacingAndGlyphs">ATTRIBUTS_MODEL</text>
<text x="207.60" y="569.00" font-size="13.9" fill="#000000" textLength="52.34" lengthAdjust="spacingAndGlyphs">2334DFB</text>
<text x="295.60" y="569.00" font-size="13.9" fill="#000000" textLength="108.25" lengthAdjust="spacingAndGlyphs">80871.3209870723</text>
<text x="412.60" y="569.00" font-size="13.9" fill="#000000" textLength="106.16" lengthAdjust="spacingAndGlyphs">1111.62894556776</text>
<text x="529.60" y="569.00" font-size="13.9" fill="#000000" textLength="78.71" lengthAdjust="spacingAndGlyphs">A$C343c8bba</text>
<text x="659.60" y="569.00" font-size="13.9" fill="#000000" textLength="50.20" lengthAdjust="spacingAndGlyphs">BYLAYER</text>
<text x="739.50" y="569.00" font-size="13.9" fill="#000000" textLength="6.81" lengthAdjust="spacingAndGlyphs">0</text>
<text x="17.60" y="589.00" font-size="13.9" fill="#000000" textLength="38.55" lengthAdjust="spacingAndGlyphs">DWG 1</text>
<text x="85.60" y="589.00" font-size="13.9" fill="#000000" textLength="114.04" lengthAdjust="spacingAndGlyphs">ATTRIBUTS_MODEL</text>
<text x="207.60" y="589.00" font-size="13.9" fill="#000000" textLength="49.61" lengthAdjust="spacingAndGlyphs">2334E56</text>
<text x="295.60" y="589.00" font-size="13.9" fill="#000000" textLength="108.25" lengthAdjust="spacingAndGlyphs">82260.2842444034</text>
<text x="412.60" y="589.00" font-size="13.9" fill="#000000" textLength="108.98" lengthAdjust="spacingAndGlyphs">1553.74385713144</text>
<text x="529.60" y="589.00" font-size="13.9" fill="#000000" textLength="75.95" lengthAdjust="spacingAndGlyphs">A$C46a0fe58</text>
<text x="659.60" y="589.00" font-size="13.9" fill="#000000" textLength="50.20" lengthAdjust="spacingAndGlyphs">BYLAYER</text>
<text x="739.50" y="589.00" font-size="13.9" fill="#000000" textLength="6.81" lengthAdjust="spacingAndGlyphs">0</text>
<text x="17.60" y="609.00" font-size="13.9" fill="#000000" textLength="38.55" lengthAdjust="spacingAndGlyphs">DWG 1</text>
<text x="85.60" y="609.00" font-size="13.9" fill="#000000" textLength="114.04" lengthAdjust="spacingAndGlyphs">ATTRIBUTS_MODEL</text>
<text x="207.60" y="609.00" font-size="13.9" fill="#000000" textLength="48.24" lengthAdjust="spacingAndGlyphs">2335529</text>
<text x="295.60" y="609.00" font-size="13.9" fill="#000000" textLength="107.32" lengthAdjust="spacingAndGlyphs">84559.5211436699</text>
<text x="412.60" y="609.00" font-size="13.9" fill="#000000" textLength="108.98" lengthAdjust="spacingAndGlyphs">1553.74385713144</text>
<text x="529.60" y="609.00" font-size="13.9" fill="#000000" textLength="75.95" lengthAdjust="spacingAndGlyphs">A$C46a0fe58</text>
<text x="659.60" y="609.00" font-size="13.9" fill="#000000" textLength="50.20" lengthAdjust="spacingAndGlyphs">BYLAYER</text>
<text x="739.50" y="609.00" font-size="13.9" fill="#000000" textLength="6.81" lengthAdjust="spacingAndGlyphs">0</text>
<text x="17.60" y="629.00" font-size="13.9" fill="#000000" textLength="38.55" lengthAdjust="spacingAndGlyphs">DWG 1</text>
<text x="85.60" y="629.00" font-size="13.9" fill="#000000" textLength="114.04" lengthAdjust="spacingAndGlyphs">ATTRIBUTS_MODEL</text>
<text x="207.60" y="629.00" font-size="13.9" fill="#000000" textLength="48.24" lengthAdjust="spacingAndGlyphs">2343129</text>
<text x="295.60" y="629.00" font-size="13.9" fill="#000000" textLength="108.25" lengthAdjust="spacingAndGlyphs">89970.8167401368</text>
<text x="412.60" y="629.00" font-size="13.9" fill="#000000" textLength="108.98" lengthAdjust="spacingAndGlyphs">1553.74385713144</text>
<text x="529.60" y="629.00" font-size="13.9" fill="#000000" textLength="75.95" lengthAdjust="spacingAndGlyphs">A$C46a0fe58</text>
<text x="659.60" y="629.00" font-size="13.9" fill="#000000" textLength="50.20" lengthAdjust="spacingAndGlyphs">BYLAYER</text>
<text x="739.50" y="629.00" font-size="13.9" fill="#000000" textLength="6.81" lengthAdjust="spacingAndGlyphs">0</text>
<text x="17.60" y="649.00" font-size="13.9" fill="#000000" textLength="38.55" lengthAdjust="spacingAndGlyphs">DWG 1</text>
<text x="85.60" y="649.00" font-size="13.9" fill="#000000" textLength="114.04" lengthAdjust="spacingAndGlyphs">ATTRIBUTS_MODEL</text>
<text x="207.60" y="649.00" font-size="13.9" fill="#000000" textLength="48.24" lengthAdjust="spacingAndGlyphs">2343181</text>
<text x="295.60" y="649.00" font-size="13.9" fill="#000000" textLength="107.32" lengthAdjust="spacingAndGlyphs">86044.5211436699</text>
<text x="412.60" y="649.00" font-size="13.9" fill="#000000" textLength="108.98" lengthAdjust="spacingAndGlyphs">1553.74385713144</text>
<text x="529.60" y="649.00" font-size="13.9" fill="#000000" textLength="75.95" lengthAdjust="spacingAndGlyphs">A$C46a0fe58</text>
<text x="659.60" y="649.00" font-size="13.9" fill="#000000" textLength="50.20" lengthAdjust="spacingAndGlyphs">BYLAYER</text>
<text x="739.50" y="649.00" font-size="13.9" fill="#000000" textLength="6.81" lengthAdjust="spacingAndGlyphs">0</text>
</g>
<path d="M205 354 h6 L205 360 Z" fill="#0f7b0f"/>
<path d="M205 374 h6 L205 380 Z" fill="#0f7b0f"/>
<path d="M205 394 h6 L205 400 Z" fill="#0f7b0f"/>
<path d="M205 414 h6 L205 420 Z" fill="#0f7b0f"/>
<path d="M205 534 h6 L205 540 Z" fill="#0f7b0f"/>
<path d="M205 574 h6 L205 580 Z" fill="#0f7b0f"/>
<path d="M205 594 h6 L205 600 Z" fill="#0f7b0f"/>
<path d="M205 614 h6 L205 620 Z" fill="#0f7b0f"/>
<path d="M205 634 h6 L205 640 Z" fill="#0f7b0f"/>
<path d="M738 534 h6 L738 540 Z" fill="#0f7b0f"/>
<path d="M738 554 h6 L738 560 Z" fill="#0f7b0f"/>
<path d="M738 574 h6 L738 580 Z" fill="#0f7b0f"/>
<path d="M738 594 h6 L738 600 Z" fill="#0f7b0f"/>
<path d="M738 614 h6 L738 620 Z" fill="#0f7b0f"/>
<path d="M738 634 h6 L738 640 Z" fill="#0f7b0f"/>
<rect x="15" y="234" width="67" height="19" fill="none" stroke="#fff" stroke-width="1" transform="translate(0.5,0.5)"/>
<path d="M13 232 H84 V251 M80 255 H13 Z" fill="none"/>
<rect x="13" y="232" width="71" height="2" fill="#107c41"/>
<rect x="13" y="232" width="2" height="23" fill="#107c41"/>
<rect x="82" y="232" width="2" height="18" fill="#107c41"/>
<rect x="13" y="253" width="66" height="2" fill="#107c41"/>
<rect x="79" y="250" width="7" height="7" fill="#fff"/>
<rect x="80" y="251" width="5" height="5" fill="#107c41"/>
<rect x="1393.8" y="214.3" width="16.8" height="473.5" rx="8.4" fill="#f6f6f6"/>
<path d="M1398.5 226 L1402.75 219 L1407 226 Z" fill="#717171" stroke="#717171" stroke-width="0.8" stroke-linejoin="round"/>
<rect x="1398" y="231" width="9" height="431" rx="4.5" fill="#717171"/>
<path d="M1398.5 676 L1402.75 683 L1407 676 Z" fill="#717171" stroke="#717171" stroke-width="0.8" stroke-linejoin="round"/>
<rect x="0" y="685" width="1412" height="32" fill="#e9e9e9"/>
<path d="M24 695.6 L17.5 700.2 L24 704.8" fill="none" stroke="#a8a8a8" stroke-width="1.1"/>
<path d="M50 695.6 L56.6 700.2 L50 704.8" fill="none" stroke="#a8a8a8" stroke-width="1.1"/>
<rect x="104.4" y="685.5" width="64" height="28" rx="4" fill="#fdfdfd"/>
<text x="113.50" y="703.00" font-size="12.5" fill="#242424" textLength="46.11" lengthAdjust="spacingAndGlyphs" stroke="#242424" stroke-width="0.45">BD_PLS</text>
<rect x="113" y="708" width="47" height="2" rx="1" fill="#107c41"/>
<rect x="172" y="692" width="1" height="17" fill="#c8c8c8"/>
<path d="M220.4 695.6 V705.8 M215 700.7 H225.8" stroke="#333" stroke-width="1.1"/>
<circle cx="846" cy="697.8" r="1" fill="#222"/><circle cx="846" cy="701.8" r="1" fill="#222"/><circle cx="846" cy="705.8" r="1" fill="#222"/>
<rect x="862" y="692.3" width="532" height="16.3" rx="8.15" fill="#f4f4f4"/>
<path d="M874 696.5 L867 700.75 L874 705 Z" fill="#777"/>
<rect x="879" y="696" width="234" height="9" rx="4.5" fill="#707070"/>
<path d="M1382 696 L1389.3 700.5 L1382 705 Z" fill="#777"/>
<rect x="0" y="717" width="1412" height="19" fill="#f4f4f4"/><rect x="0" y="717" width="1412" height="1" fill="#ffffff"/>
<text x="0.90" y="732.40" font-size="11.5" fill="#242424" textLength="18.39" lengthAdjust="spacingAndGlyphs" stroke="#242424" stroke-width="0.2">Prêt</text>
<g fill="none" stroke="#333" stroke-width="1" stroke-linejoin="round"><circle cx="46.5" cy="723.3" r="1.7"/><path d="M40.5 725.5 Q43.5 727.5 46.5 726.5 Q49.5 725.5 52.5 725.2 L50.5 728 L49.5 731"/><path d="M44 727 L44.5 730 L42 734.5"/><path d="M48.5 733 L50.5 735 L55 730.5"/></g>
<text x="58.50" y="732.40" font-size="11.5" fill="#242424" textLength="174.99" lengthAdjust="spacingAndGlyphs" stroke="#242424" stroke-width="0.2">Accessibilité : vérification terminée</text>
<rect x="1099" y="718" width="39" height="18" fill="#dfdfdf"/>
<g fill="none" stroke="#333" stroke-width="1"><rect x="1112.5" y="721.5" width="12" height="12"/><path d="M1116.5 721.5 V733.5 M1120.5 721.5 V733.5 M1112.5 725.5 H1124.5 M1112.5 729.5 H1124.5"/></g>
<g fill="none" stroke="#333" stroke-width="1"><rect x="1152.5" y="721.5" width="13" height="12"/><rect x="1155.5" y="723.5" width="7" height="8"/><path d="M1157 725.5 H1161 M1157 727.5 H1161 M1157 729.5 H1161"/></g>
<g fill="none" stroke="#333" stroke-width="1"><rect x="1192.5" y="721.5" width="13" height="12"/><path d="M1192.5 728.5 H1200.5 V721.5 M1196.5 721.5 V728.5"/></g>
<path d="M1225 727.7 H1232.7" stroke="#333" stroke-width="1"/>
<rect x="1238" y="727.6" width="99.5" height="1" fill="#707070"/>
<rect x="1286" y="723.2" width="5" height="10.6" fill="#5c5c5c"/>
<path d="M1346.6 724.5 V732 M1342.8 728.2 H1350.5" stroke="#333" stroke-width="1"/>
<text x="1365.00" y="731.80" font-size="11.5" fill="#242424" textLength="29.00" lengthAdjust="spacingAndGlyphs" stroke="#242424" stroke-width="0.2">100 %</text>
<rect x="1413" y="0" width="1" height="736" fill="#107c41"/><rect x="1412" y="0" width="1" height="736" fill="#9cc7ae" opacity="0.5"/>
</svg></body></html>
